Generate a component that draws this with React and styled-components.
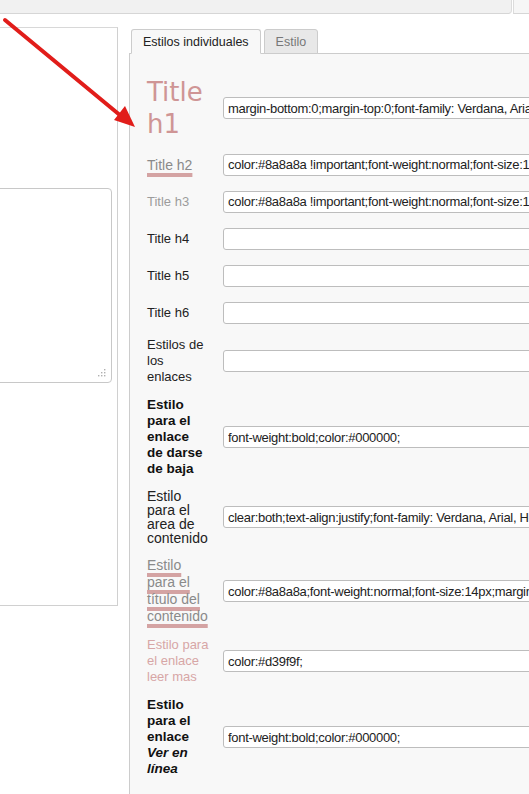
import React from "react";
import styled, { createGlobalStyle } from "styled-components";

const rows = [
  {
    label: "Title h1",
    kind: "h1",
    value: "margin-bottom:0;margin-top:0;font-family: Verdana, Arial, Helvetica, sans-serif;font-size:26px;",
  },
  {
    label: "Title h2",
    kind: "h2",
    value: "color:#8a8a8a !important;font-weight:normal;font-size:14px;text-decoration:underline;",
  },
  {
    label: "Title h3",
    kind: "h3",
    value: "color:#8a8a8a !important;font-weight:normal;font-size:13px;",
  },
  { label: "Title h4", value: "" },
  { label: "Title h5", value: "" },
  { label: "Title h6", value: "" },
  { label: "Estilos de los enlaces", value: "" },
  {
    label: "Estilo para el enlace de darse de baja",
    kind: "bold",
    value: "font-weight:bold;color:#000000;",
  },
  {
    label: "Estilo para el area de contenido",
    kind: "area",
    value: "clear:both;text-align:justify;font-family: Verdana, Arial, Helvetica, sans-serif;",
  },
  {
    label: "Estilo para el título del contenido",
    kind: "titulo",
    value: "color:#8a8a8a;font-weight:normal;font-size:14px;margin-bottom:0;",
  },
  {
    label: "Estilo para el enlace leer mas",
    kind: "leer",
    value: "color:#d39f9f;",
  },
  {
    label: "Estilo para el enlace ",
    italic: "Ver en línea",
    kind: "bold",
    value: "font-weight:bold;color:#000000;",
  },
];

const labelStyles = {
  h1: { size: 26, lh: 32, color: "#cf9595", family: '"DejaVu Sans", Verdana, sans-serif' },
  h2: { size: 14, lh: 16, color: "#8a8a8a", underline: true },
  h3: { size: 13, lh: 16, color: "#9c9c9c" },
  bold: { size: 13.5, lh: 16, color: "#111111", weight: "bold", width: 58 },
  area: { size: 14, lh: 14, color: "#222222" },
  titulo: { size: 14, lh: 17, color: "#8a8a8a", underline: true },
  leer: { size: 13, lh: 16, color: "#d7a6a6" },
};

export default function App() {
  return (
    <Page>
      <GlobalStyle />
      <TopBar>
        <TopBarMain />
        <TopBarEnd />
      </TopBar>
      <Main>
        <LeftBox>
          <Editor>
            <ResizeGrip viewBox="0 0 9 9">
              <rect x="7" y="1" width="1.4" height="1.4" />
              <rect x="4" y="4" width="1.4" height="1.4" />
              <rect x="7" y="4" width="1.4" height="1.4" />
              <rect x="1" y="7" width="1.4" height="1.4" />
              <rect x="4" y="7" width="1.4" height="1.4" />
              <rect x="7" y="7" width="1.4" height="1.4" />
            </ResizeGrip>
          </Editor>
        </LeftBox>
        <RightCol>
          <Tabs>
            <Tab $active>Estilos individuales</Tab>
            <Tab>Estilo</Tab>
          </Tabs>
          <Panel>
            {rows.map((row, i) => {
              const s = labelStyles[row.kind] || { size: 13, lh: 16, color: "#222222" };
              return (
                <Row key={i}>
                  <Label
                    $size={s.size}
                    $lh={s.lh}
                    $color={s.color}
                    $weight={s.weight}
                    $family={s.family}
                    $width={s.width}
                  >
                    {s.underline ? <Marked>{row.label}</Marked> : row.label}
                    {row.italic && <em>{row.italic}</em>}
                  </Label>
                  <StyleInput type="text" defaultValue={row.value} />
                </Row>
              );
            })}
          </Panel>
        </RightCol>
      </Main>
      <Arrow viewBox="0 0 529 794" width="529" height="794">
        <line x1="5" y1="20" x2="121" y2="116" stroke="#e11d1a" strokeWidth="4" strokeLinecap="round" />
        <polygon points="135,127 114,120 125,106" fill="#e11d1a" />
      </Arrow>
    </Page>
  );
}

const GlobalStyle = createGlobalStyle`
  html, body {
    margin: 0;
    padding: 0;
    background: #ffffff;
    overflow: hidden;
  }
  * {
    box-sizing: border-box;
  }
`;

const Page = styled.div`
  position: relative;
  width: 529px;
  height: 794px;
  overflow: hidden;
  font-family: "Liberation Sans", Arial, sans-serif;
  color: #222;
`;

const TopBar = styled.div`
  display: flex;
  height: 14px;
`;

const TopBarMain = styled.div`
  flex: 1;
  background: #f1f1f1;
  border-bottom: 1px solid #d6d6d6;
  border-right: 1px solid #dcdcdc;
  border-bottom-right-radius: 4px;
`;

const TopBarEnd = styled.div`
  width: 16px;
  margin-left: 1px;
  background: #f6f6f6;
  border-left: 1px solid #dcdcdc;
  border-bottom: 1px solid #d6d6d6;
`;

const Main = styled.div`
  display: flex;
  align-items: flex-start;
  margin-top: 13px;
`;

const LeftBox = styled.div`
  flex: none;
  width: 118px;
  height: 579px;
  padding-top: 160px;
  padding-right: 5px;
  background: #ffffff;
  border-top: 1px solid #d8d8d8;
  border-right: 1px solid #d0d0d0;
  border-bottom: 1px solid #d0d0d0;
`;

const Editor = styled.div`
  position: relative;
  height: 195px;
  margin-left: -10px;
  background: #ffffff;
  border: 1px solid #c8c8c8;
  border-radius: 4px;
`;

const ResizeGrip = styled.svg`
  position: absolute;
  right: 5px;
  bottom: 5px;
  width: 9px;
  height: 9px;
  fill: #b0b0b0;
`;

const RightCol = styled.div`
  flex: 1;
  min-width: 0;
  margin-left: 11px;
  margin-top: 2px;
`;

const Tabs = styled.div`
  display: flex;
  gap: 3px;
  padding-left: 2px;
  position: relative;
  z-index: 1;
  margin-bottom: -1px;
`;

const Tab = styled.div`
  height: 25px;
  padding: 0 11px;
  display: flex;
  align-items: center;
  font-size: 12.5px;
  color: ${p => (p.$active ? "#222222" : "#777777")};
  background: ${p => (p.$active ? "#f8f8f8" : "#e8e8e8")};
  border: 1px solid #cccccc;
  border-bottom-color: ${p => (p.$active ? "#f8f8f8" : "#cccccc")};
  border-radius: 3px 3px 0 0;
`;

const Panel = styled.div`
  display: flex;
  flex-direction: column;
  gap: 12px;
  min-height: 760px;
  padding: 22px 0 0 17px;
  background: #f8f8f8;
  border-top: 1px solid #cccccc;
  border-left: 1px solid #cccccc;
`;

const Row = styled.div`
  display: flex;
  align-items: center;
  min-height: 25px;
`;

const Label = styled.div`
  flex: none;
  width: ${p => p.$width || 64}px;
  margin-right: ${p => 76 - (p.$width || 64)}px;
  font-family: ${p => p.$family || '"Liberation Sans", Arial, sans-serif'};
  font-size: ${p => p.$size}px;
  line-height: ${p => p.$lh}px;
  font-weight: ${p => p.$weight || "normal"};
  color: ${p => p.$color};

  em {
    font-style: italic;
  }
`;

const Marked = styled.span`
  text-decoration: underline;
  text-decoration-color: #d4a3a3;
  text-decoration-thickness: 4px;
  text-underline-offset: 3px;
  text-decoration-skip-ink: none;
`;

const StyleInput = styled.input`
  flex: none;
  width: 420px;
  height: 22px;
  padding: 0 4px;
  font-family: "Liberation Sans", Arial, sans-serif;
  font-size: 13px;
  letter-spacing: -0.3px;
  color: #222222;
  background: #ffffff;
  border: 1px solid #bdbdbd;
  border-radius: 3px;
  outline: none;
`;

const Arrow = styled.svg`
  position: absolute;
  left: 0;
  top: 0;
  pointer-events: none;
`;
